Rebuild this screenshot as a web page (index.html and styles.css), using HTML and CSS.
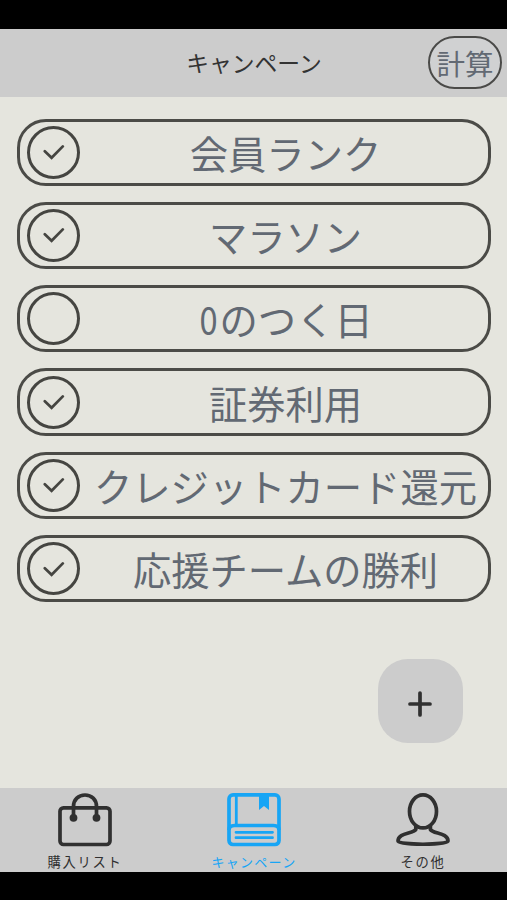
FILE: index.html
```html
<!DOCTYPE html>
<html lang="ja">
<head>
    <meta charset="UTF-8">
    <meta name="viewport" content="width=device-width, initial-scale=1.0">
    <title>キャンペーン</title>
    <link rel="stylesheet" href="styles.css">
</head>
<body>
    <div class="screen">
        <header class="header">
            <h1 class="title">キャンペーン</h1>
            <button class="calc-button" type="button">計算</button>
        </header>

        <main class="content">
            <ul class="campaign-list">
                <li class="campaign">
                    <span class="check"><svg viewBox="0 0 22 16"><path d="M1.8 7.2 L8.6 13.8 L19.8 2.4"/></svg></span>
                    <span class="campaign-name">会員ランク</span>
                </li>
                <li class="campaign">
                    <span class="check"><svg viewBox="0 0 22 16"><path d="M1.8 7.2 L8.6 13.8 L19.8 2.4"/></svg></span>
                    <span class="campaign-name">マラソン</span>
                </li>
                <li class="campaign">
                    <span class="check"></span>
                    <span class="campaign-name"><span class="zero">0</span>のつく日</span>
                </li>
                <li class="campaign">
                    <span class="check"><svg viewBox="0 0 22 16"><path d="M1.8 7.2 L8.6 13.8 L19.8 2.4"/></svg></span>
                    <span class="campaign-name">証券利用</span>
                </li>
                <li class="campaign">
                    <span class="check"><svg viewBox="0 0 22 16"><path d="M1.8 7.2 L8.6 13.8 L19.8 2.4"/></svg></span>
                    <span class="campaign-name">クレジットカード還元</span>
                </li>
                <li class="campaign">
                    <span class="check"><svg viewBox="0 0 22 16"><path d="M1.8 7.2 L8.6 13.8 L19.8 2.4"/></svg></span>
                    <span class="campaign-name">応援チームの勝利</span>
                </li>
            </ul>
            <button class="add-button" type="button" aria-label="追加">
                <svg viewBox="0 0 24 26"><path d="M12 2 V24 M2 13 H22"/></svg>
            </button>
        </main>

        <nav class="tabs">
            <a class="tab">
                <svg class="tab-icon" viewBox="0 0 54 54">
                    <rect x="2" y="14.8" width="50" height="36.7" rx="3.5"/>
                    <path d="M15.5 25 V13.5 C15.5 6.5 20.5 2 27 2 S38.5 6.5 38.5 13.5 V25"/>
                    <circle class="fill" cx="15.5" cy="24.8" r="3.9"/>
                    <circle class="fill" cx="38.5" cy="24.8" r="3.9"/>
                </svg>
                <span class="tab-label">購入リスト</span>
            </a>
            <a class="tab active">
                <svg class="tab-icon" viewBox="0 0 54 54">
                    <rect x="2" y="1.9" width="50" height="49.6" rx="4"/>
                    <path class="thin" d="M9.3 2 V32"/>
                    <path d="M2 37 C2 34 4 32.5 7.5 32.5 H46.5 C50 32.5 52 34 52 37"/>
                    <path class="thin" d="M9 39.3 H45.5 M9 44.7 H45.5"/>
                    <path class="fill" d="M32 2 H42 V17 L37 13 L32 17 Z"/>
                </svg>
                <span class="tab-label">キャンペーン</span>
            </a>
            <a class="tab">
                <svg class="tab-icon" viewBox="0 0 54 54">
                    <ellipse cx="27" cy="18.4" rx="13.5" ry="16.5"/>
                    <path d="M19.8 33 V36.5 C17 41 2 39.5 2 48 C2 52.3 52 52.3 52 48 C52 39.5 37 41 34.4 36.5 V33"/>
                </svg>
                <span class="tab-label">その他</span>
            </a>
        </nav>
    </div>
</body>
</html>
```
FILE: styles.css
```css
* {
    box-sizing: border-box;
}

body {
    margin: 0;
    background-color: #000;
    font-family: "Noto Sans CJK JP", sans-serif;
}

button {
    padding: 0;
    font-family: inherit;
}

.screen {
    display: flex;
    flex-direction: column;
    height: 900px;
    padding: 29px 0 28px;
    overflow: hidden;
}

.header {
    display: grid;
    grid-template-columns: 80px 1fr 80px;
    align-items: center;
    height: 67.5px;
    padding-right: 5px;
    background-color: #ccc;
}

.title {
    grid-column: 2;
    margin: 0 0 0 6px;
    text-align: center;
    font-size: 22.8px;
    font-weight: 400;
    line-height: 30px;
    color: #333;
}

.calc-button {
    justify-self: end;
    width: 74px;
    height: 53px;
    border: 2.6px solid #4a4a48;
    border-radius: 27px;
    background-color: #d0d1d2;
    font-size: 28.5px;
    line-height: 46px;
    color: #626973;
}

.content {
    display: flex;
    flex-direction: column;
    flex: 1;
    padding: 22px 16px 0 16.5px;
    background-color: #e5e5de;
}

.campaign-list {
    display: grid;
    gap: 15.9px;
    margin: 0;
    padding: 0;
    list-style: none;
}

.campaign {
    display: flex;
    align-items: center;
    height: 67.4px;
    padding-left: 7.5px;
    border: 3px solid #4b4b47;
    border-radius: 29px;
}

.check {
    display: flex;
    flex: none;
    align-items: center;
    justify-content: center;
    width: 53px;
    height: 53px;
    border: 3px solid #454541;
    border-radius: 50%;
}

.check svg {
    width: 22px;
    height: 16px;
    fill: none;
    stroke: #454541;
    stroke-width: 2.7;
    stroke-linecap: round;
}

.campaign-name {
    flex: 1;
    padding: 1px 0 0 3px;
    text-align: center;
    font-size: 38.3px;
    line-height: 56px;
    white-space: nowrap;
    color: #626973;
}

.zero {
    display: inline-block;
    transform: scaleX(0.85);
}

.add-button {
    display: flex;
    align-items: center;
    justify-content: center;
    align-self: flex-end;
    width: 84.5px;
    height: 84.5px;
    margin: 56.5px 28.5px 0 0;
    border: none;
    border-radius: 30px;
    background-color: #ccc;
}

.add-button svg {
    width: 24px;
    height: 26px;
    margin-top: 5px;
    stroke: #303030;
    stroke-width: 3.7;
    stroke-linecap: round;
}

.tabs {
    display: grid;
    grid-template-columns: repeat(3, 1fr);
    height: 84.5px;
    background-color: #ccc;
}

.tab {
    display: flex;
    flex-direction: column;
    align-items: center;
    padding-top: 5px;
    color: #303030;
}

.tab.active {
    color: #17a5f5;
}

.tab-icon {
    width: 54px;
    height: 54px;
    fill: none;
    stroke: currentColor;
    stroke-width: 3.7;
    stroke-linejoin: round;
}

.tab-icon .fill {
    fill: currentColor;
    stroke: none;
}

.tab-icon .thin {
    stroke-width: 2.8;
    stroke-linecap: round;
}

.tab-label {
    margin-top: 5px;
    padding-left: 1px;
    font-size: 13.3px;
    line-height: 20px;
    letter-spacing: 1.7px;
}

.active .tab-label {
    font-size: 13px;
    letter-spacing: 1.3px;
}
```
